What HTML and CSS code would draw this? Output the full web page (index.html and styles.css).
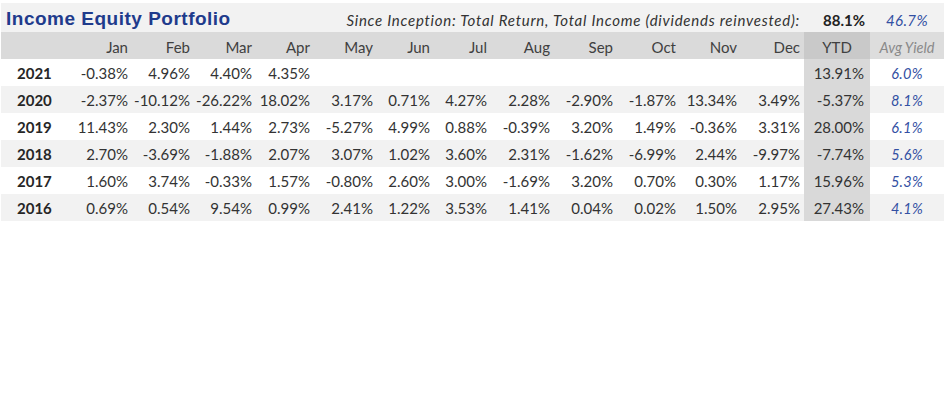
FILE: index.html
```html
<!DOCTYPE html>
<html lang="en">
<head>
<meta charset="utf-8">
<title>Income Equity Portfolio</title>
<link rel="stylesheet" href="styles.css">
</head>
<body>
<div class="sheet">
  <div class="row title-row">
    <div class="title-cell">
      <span class="title">Income Equity Portfolio</span>
      <span class="since">Since Inception: Total Return, Total Income (dividends reinvested):</span>
    </div>
    <div class="cell total">88.1%</div>
    <div class="cell income">46.7%</div>
  </div>
  <div class="row head-row">
    <div class="cell"></div>
    <div class="cell">Jan</div><div class="cell">Feb</div><div class="cell">Mar</div><div class="cell">Apr</div>
    <div class="cell">May</div><div class="cell">Jun</div><div class="cell">Jul</div><div class="cell">Aug</div>
    <div class="cell">Sep</div><div class="cell">Oct</div><div class="cell">Nov</div><div class="cell">Dec</div>
    <div class="cell ytd">YTD</div>
    <div class="cell avg">Avg Yield</div>
  </div>
  <div class="row data-row">
    <div class="cell year">2021</div>
    <div class="cell">-0.38%</div><div class="cell">4.96%</div><div class="cell">4.40%</div><div class="cell">4.35%</div>
    <div class="cell"></div><div class="cell"></div><div class="cell"></div><div class="cell"></div>
    <div class="cell"></div><div class="cell"></div><div class="cell"></div><div class="cell"></div>
    <div class="cell ytd">13.91%</div>
    <div class="cell avg">6.0%</div>
  </div>
  <div class="row data-row alt">
    <div class="cell year">2020</div>
    <div class="cell">-2.37%</div><div class="cell">-10.12%</div><div class="cell">-26.22%</div><div class="cell">18.02%</div>
    <div class="cell">3.17%</div><div class="cell">0.71%</div><div class="cell">4.27%</div><div class="cell">2.28%</div>
    <div class="cell">-2.90%</div><div class="cell">-1.87%</div><div class="cell">13.34%</div><div class="cell">3.49%</div>
    <div class="cell ytd">-5.37%</div>
    <div class="cell avg">8.1%</div>
  </div>
  <div class="row data-row">
    <div class="cell year">2019</div>
    <div class="cell">11.43%</div><div class="cell">2.30%</div><div class="cell">1.44%</div><div class="cell">2.73%</div>
    <div class="cell">-5.27%</div><div class="cell">4.99%</div><div class="cell">0.88%</div><div class="cell">-0.39%</div>
    <div class="cell">3.20%</div><div class="cell">1.49%</div><div class="cell">-0.36%</div><div class="cell">3.31%</div>
    <div class="cell ytd">28.00%</div>
    <div class="cell avg">6.1%</div>
  </div>
  <div class="row data-row alt">
    <div class="cell year">2018</div>
    <div class="cell">2.70%</div><div class="cell">-3.69%</div><div class="cell">-1.88%</div><div class="cell">2.07%</div>
    <div class="cell">3.07%</div><div class="cell">1.02%</div><div class="cell">3.60%</div><div class="cell">2.31%</div>
    <div class="cell">-1.62%</div><div class="cell">-6.99%</div><div class="cell">2.44%</div><div class="cell">-9.97%</div>
    <div class="cell ytd">-7.74%</div>
    <div class="cell avg">5.6%</div>
  </div>
  <div class="row data-row">
    <div class="cell year">2017</div>
    <div class="cell">1.60%</div><div class="cell">3.74%</div><div class="cell">-0.33%</div><div class="cell">1.57%</div>
    <div class="cell">-0.80%</div><div class="cell">2.60%</div><div class="cell">3.00%</div><div class="cell">-1.69%</div>
    <div class="cell">3.20%</div><div class="cell">0.70%</div><div class="cell">0.30%</div><div class="cell">1.17%</div>
    <div class="cell ytd">15.96%</div>
    <div class="cell avg">5.3%</div>
  </div>
  <div class="row data-row alt">
    <div class="cell year">2016</div>
    <div class="cell">0.69%</div><div class="cell">0.54%</div><div class="cell">9.54%</div><div class="cell">0.99%</div>
    <div class="cell">2.41%</div><div class="cell">1.22%</div><div class="cell">3.53%</div><div class="cell">1.41%</div>
    <div class="cell">0.04%</div><div class="cell">0.02%</div><div class="cell">1.50%</div><div class="cell">2.95%</div>
    <div class="cell ytd">27.43%</div>
    <div class="cell avg">4.1%</div>
  </div>
</div>
</body>
</html>
```
FILE: styles.css
```css
html, body {
  margin: 0;
  padding: 0;
  background: #ffffff;
}

.sheet {
  padding: 3px 1px 0 1px;
  font-family: Lato, "Open Sans", sans-serif;
  font-size: 15px;
  color: #333333;
}

.row {
  display: grid;
  grid-template-columns: 69px 62px 62px 62px 58px 63px 57px 57px 63px 63px 63px 61px 63px 66px 74px;
  width: 943px;
}

.cell {
  display: flex;
  align-items: center;
  justify-content: flex-end;
  padding-right: 4px;
  white-space: nowrap;
}

/* Title row */
.title-row {
  height: 29px;
  background: #f2f2f2;
}

.title-cell {
  grid-column: 1 / 14;
  display: flex;
  align-items: center;
  justify-content: space-between;
  padding: 0 4px 0 5px;
}

.title {
  font-family: "Liberation Sans", Arial, sans-serif;
  font-weight: bold;
  font-size: 19px;
  letter-spacing: 0.5px;
  color: #1f3b8c;
  padding-top: 2px;
}

.since {
  font-style: italic;
  font-size: 15px;
  letter-spacing: 0.75px;
  color: #333333;
  padding-top: 4px;
}

.total {
  font-weight: bold;
  color: #222222;
  padding-right: 5px;
  padding-top: 4px;
}

.income {
  justify-content: center;
  padding-right: 0;
  padding-top: 5px;
  font-style: italic;
  font-size: 15px;
  letter-spacing: 0.4px;
  color: #3350a3;
}

/* Header row */
.head-row {
  height: 27px;
  background: #dadada;
  color: #404040;
}

.head-row .cell {
  padding-top: 3px;
}

.head-row .ytd {
  background: #c9c9c9;
  justify-content: center;
  padding-right: 0;
}

.head-row .avg {
  background: #dddddd;
  justify-content: center;
  padding-right: 0;
  font-style: italic;
  font-size: 14.5px;
  color: #8a8a8a;
}

/* Data rows */
.data-row {
  height: 27px;
  background: #ffffff;
}

.data-row.alt {
  background: #f2f2f2;
}

.data-row .year {
  justify-content: flex-start;
  padding-left: 16px;
  padding-right: 0;
  font-weight: bold;
  color: #262626;
}

.data-row .ytd {
  background: #d9d9d9;
  padding-right: 6px;
}

.data-row .avg {
  justify-content: center;
  padding-right: 0;
  padding-top: 2px;
  font-style: italic;
  font-size: 14.5px;
  letter-spacing: 0.3px;
  color: #3350a3;
}
```
